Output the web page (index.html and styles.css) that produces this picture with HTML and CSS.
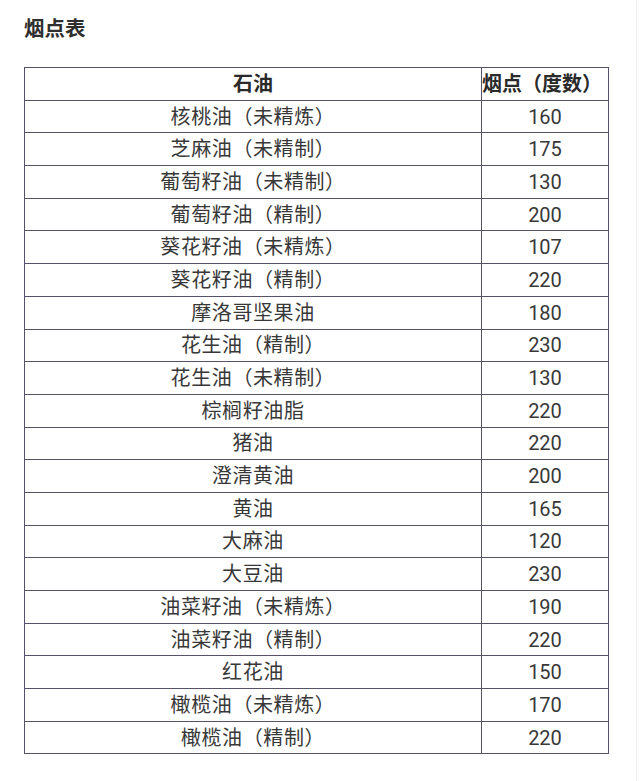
FILE: index.html
```html
<!DOCTYPE html>
<html lang="zh">
<head>
<meta charset="utf-8">
<title>烟点表</title>
<link rel="stylesheet" href="styles.css">
</head>
<body>
<div class="page">
  <h1 class="title">烟点表</h1>
  <table class="smoke">
    <colgroup><col class="c-name"><col class="c-val"></colgroup>
    <thead>
      <tr><th>石油</th><th class="h-val">烟点（度数）</th></tr>
    </thead>
    <tbody>
      <tr><td>核桃油（未精炼）</td><td>160</td></tr>
      <tr><td>芝麻油（未精制）</td><td>175</td></tr>
      <tr><td>葡萄籽油（未精制）</td><td>130</td></tr>
      <tr><td>葡萄籽油（精制）</td><td>200</td></tr>
      <tr><td>葵花籽油（未精炼）</td><td>107</td></tr>
      <tr><td>葵花籽油（精制）</td><td>220</td></tr>
      <tr><td>摩洛哥坚果油</td><td>180</td></tr>
      <tr><td>花生油（精制）</td><td>230</td></tr>
      <tr><td>花生油（未精制）</td><td>130</td></tr>
      <tr><td>棕榈籽油脂</td><td>220</td></tr>
      <tr><td>猪油</td><td>220</td></tr>
      <tr><td>澄清黄油</td><td>200</td></tr>
      <tr><td>黄油</td><td>165</td></tr>
      <tr><td>大麻油</td><td>120</td></tr>
      <tr><td>大豆油</td><td>230</td></tr>
      <tr><td>油菜籽油（未精炼）</td><td>190</td></tr>
      <tr><td>油菜籽油（精制）</td><td>220</td></tr>
      <tr><td>红花油</td><td>150</td></tr>
      <tr><td>橄榄油（未精炼）</td><td>170</td></tr>
      <tr><td>橄榄油（精制）</td><td>220</td></tr>
    </tbody>
  </table>
</div>
</body>
</html>
```
FILE: styles.css
```css
html, body {
  margin: 0;
  padding: 0;
  background: #ffffff;
}
body {
  font-family: "Roboto", "Noto Sans CJK SC", sans-serif;
  color: #333333;
}
.page {
  width: 637px;
  height: 781px;
  box-sizing: border-box;
  padding: 14px 0 0 24px;
  border-right: 1px solid #eeeeee;
}
.title {
  margin: 0;
  font-family: "Noto Sans CJK SC", sans-serif;
  font-size: 20.5px;
  font-weight: 700;
  line-height: 26px;
  color: #2e2e2e;
}
.smoke {
  margin-top: 27px;
  border-collapse: collapse;
  table-layout: fixed;
  width: 584px;
}
.c-name { width: 457px; }
.c-val { width: 127px; }
.smoke th,
.smoke td {
  border: 1px solid #57516a;
  height: 32.7px;
  padding: 0;
  box-sizing: border-box;
  text-align: center;
  vertical-align: middle;
  font-size: 20px;
  line-height: 24px;
  font-weight: 400;
  color: #383838;
}
.smoke td:first-child {
  letter-spacing: 0.6px;
}
.smoke th {
  font-weight: 700;
  color: #2a2a2a;
}
.smoke th.h-val {
  text-align: left;
  white-space: nowrap;
  overflow: visible;
}
```
